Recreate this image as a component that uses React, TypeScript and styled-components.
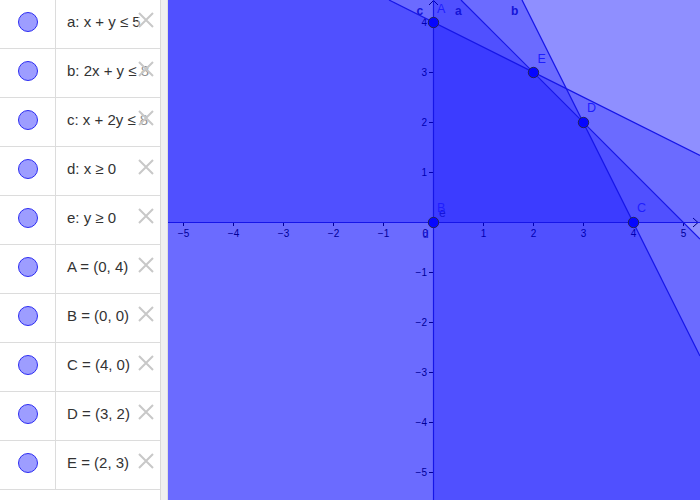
import React from "react";
import styled, { createGlobalStyle } from "styled-components";

const GlobalStyle = createGlobalStyle`
  html, body { margin: 0; padding: 0; background: #ffffff; overflow: hidden; }
  body { font-family: "Liberation Sans", Arial, sans-serif; }
`;

const Layout = styled.div`
  display: flex;
  width: 700px;
  height: 500px;
  overflow: hidden;
`;

const AlgebraPanel = styled.div`
  width: 160px;
  flex: 0 0 160px;
  display: flex;
  flex-direction: column;
  background: #ffffff;
  border-right: 1px solid #d9d9d9;
`;

const Row = styled.div`
  position: relative;
  display: flex;
  height: 48px;
  flex: 0 0 48px;
  border-bottom: 1px solid #dcdcdc;
`;

const MarkerCell = styled.div`
  width: 56px;
  flex: 0 0 56px;
  display: flex;
  justify-content: center;
  align-items: flex-start;
  padding-top: 12px;
  box-sizing: border-box;
  border-right: 1px solid #dcdcdc;
`;

const Marker = styled.div`
  width: 18px;
  height: 18px;
  border-radius: 50%;
  background: #9d9dff;
  border: 1px solid #2c2cf2;
`;

const TextCell = styled.div`
  flex: 1;
  min-width: 0;
  padding: 12px 0 0 11px;
  font-size: 15px;
  line-height: 20px;
  color: #333333;
  white-space: nowrap;
  overflow: hidden;
`;

const DeleteButton = styled.div`
  position: absolute;
  top: 12px;
  right: 6px;
  width: 16px;
  height: 16px;
  background: rgba(255, 255, 255, 0.45);
  display: flex;
  align-items: center;
  justify-content: center;
`;

const Splitter = styled.div`
  width: 6px;
  flex: 0 0 6px;
  background: #f0f0f0;
  border-right: 1px solid #e0e0e0;
`;

const GraphicsView = styled.div`
  flex: 1;
  height: 500px;
  background: #ffffff;
  svg { display: block; }
`;

const rows = [
  "a: x + y ≤ 5",
  "b: 2x + y ≤ 8",
  "c: x + 2y ≤ 8",
  "d: x ≥ 0",
  "e: y ≥ 0",
  "A = (0, 4)",
  "B = (0, 0)",
  "C = (4, 0)",
  "D = (3, 2)",
  "E = (2, 3)",
];

const OX = 433;
const OY = 222;
const S = 50;
const px = (x: number) => OX + S * x;
const py = (y: number) => OY - S * y;

const FILL = "rgba(0,0,255,0.25)";
const LINE = "#1616e8";

const halfPlanes = [
  "168,0 461,0 700,239 700,500 168,500",
  "168,0 522,0 700,356 700,500 168,500",
  "168,0 389,0 700,155.5 700,500 168,500",
  "433,0 700,0 700,500 433,500",
  "168,0 700,0 700,222 168,222",
];

const points = [
  { n: "A", x: 0, y: 4, lx: 437, ly: 13 },
  { n: "B", x: 0, y: 0, lx: 437, ly: 212 },
  { n: "C", x: 4, y: 0, lx: 637, ly: 212 },
  { n: "D", x: 3, y: 2, lx: 587, ly: 112 },
  { n: "E", x: 2, y: 3, lx: 537.5, ly: 63 },
];

const XIcon = () => (
  <svg width="16" height="16" viewBox="0 0 16 16">
    <path d="M1 1 L15 15 M15 1 L1 15" stroke="#c8c8c8" strokeWidth="2" fill="none" />
  </svg>
);

const Graph = () => {
  const xs = [-5, -4, -3, -2, -1, 1, 2, 3, 4, 5];
  const ys = [-5, -4, -3, -2, -1, 1, 2, 3, 4];
  return (
    <svg width="532" height="500" viewBox="168 0 532 500">
      <g stroke="#000" strokeWidth="1" fill="none">
        <line x1="168" y1={OY + 0.5} x2="699" y2={OY + 0.5} />
        <line x1={OX + 0.5} y1="0" x2={OX + 0.5} y2="500" />
        <path d={`M693 ${OY - 4} L698 ${OY + 0.5} L693 ${OY + 5}`} />
        <path d={`M${OX - 4} 5 L${OX + 0.5} 0.5 L${OX + 5} 5`} />
        {xs.map((v) => (
          <line key={"tx" + v} x1={px(v) + 0.5} y1={OY} x2={px(v) + 0.5} y2={OY + 4} />
        ))}
        {ys.map((v) => (
          <line key={"ty" + v} x1={OX - 4} y1={py(v) + 0.5} x2={OX} y2={py(v) + 0.5} />
        ))}
      </g>
      <g fill="#000" fontSize="10" fontFamily="Liberation Sans, Arial, sans-serif">
        {xs.map((v) => (
          <text key={"lx" + v} x={px(v) + 0.5} y={237} textAnchor="middle">
            {v < 0 ? "\u2212" + Math.abs(v) : String(v)}
          </text>
        ))}
        {ys.map((v) => (
          <text key={"ly" + v} x={427} y={py(v) + 4} textAnchor="end">
            {v < 0 ? "\u2212" + Math.abs(v) : String(v)}
          </text>
        ))}
        <text x={428} y={237} textAnchor="end">0</text>
      </g>
      {halfPlanes.map((p, i) => (
        <polygon key={i} points={p} fill={FILL} />
      ))}
      <g stroke={LINE} strokeWidth="1.2" fill="none">
        <line x1="461" y1="0" x2="700" y2="239" />
        <line x1="522" y1="0" x2="700" y2="356" />
        <line x1="389" y1="0" x2="700" y2="155.5" />
        <line x1={OX + 0.5} y1="0" x2={OX + 0.5} y2="500" />
        <line x1="168" y1={OY + 0.5} x2="700" y2={OY + 0.5} />
      </g>
      <g fill="#1414d8" fontSize="12" fontWeight="bold" fontFamily="Liberation Sans, Arial, sans-serif">
        <text x={416.5} y={15}>c</text>
        <text x={455} y={15}>a</text>
        <text x={511} y={15}>b</text>
        <text x={422.5} y={238} fontWeight="normal" fontSize="11">d</text>
        <text x={439} y={217} fontWeight="normal">e</text>
      </g>
      {points.map((p) => (
        <circle key={p.n} cx={px(p.x) + 0.5} cy={py(p.y) + 0.5} r={5.2} fill="#0606ff" stroke="#23234a" strokeWidth="0.9" />
      ))}
      <g fill="#1e1eff" fontSize="12.5" fontFamily="Liberation Sans, Arial, sans-serif">
        {points.map((p) => (
          <text key={"pl" + p.n} x={p.lx} y={p.ly}>{p.n}</text>
        ))}
      </g>
    </svg>
  );
};

export default function App() {
  return (
    <>
      <GlobalStyle />
      <Layout>
        <AlgebraPanel>
          {rows.map((r) => (
            <Row key={r}>
              <MarkerCell>
                <Marker />
              </MarkerCell>
              <TextCell>{r}</TextCell>
              <DeleteButton>
                <XIcon />
              </DeleteButton>
            </Row>
          ))}
        </AlgebraPanel>
        <Splitter />
        <GraphicsView>
          <Graph />
        </GraphicsView>
      </Layout>
    </>
  );
}
